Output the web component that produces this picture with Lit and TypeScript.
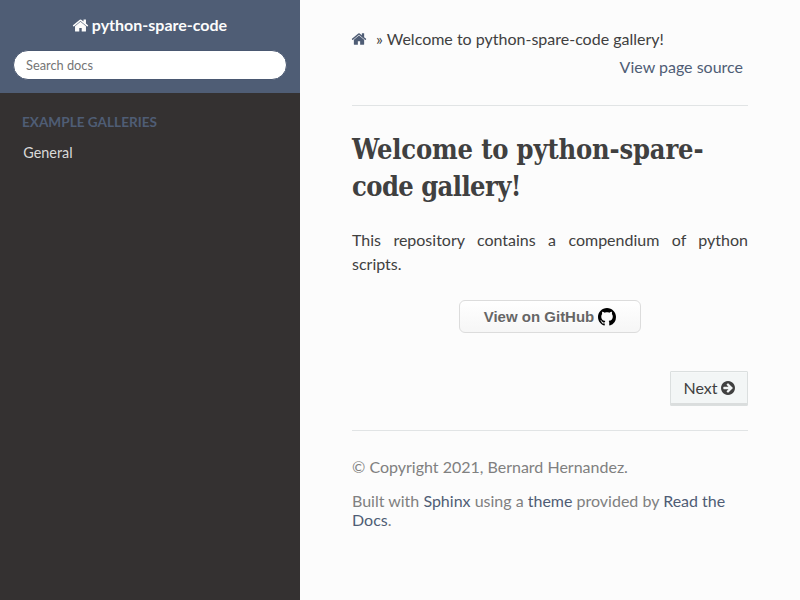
import { LitElement, html, css, svg } from "lit";
import { customElement } from "lit/decorators.js";

const homeIcon = svg`<path d="M1472 992v480q0 26-19 45t-45 19h-384v-384h-256v384h-384q-26 0-45-19t-19-45v-480q0-1 .5-3t.5-3l575-474 575 474q1 2 1 6zm223-69l-62 74q-8 9-21 11h-3q-13 0-21-7l-692-577-692 577q-12 8-24 7-13-2-21-11l-62-74q-8-10-7-23.5t11-21.5l719-599q32-26 76-26t76 26l244 204v-195q0-14 9-23t23-9h192q14 0 23 9t9 23v408l219 182q10 8 11 21.5t-7 23.5z"/>`;
const arrowIcon = svg`<path d="M1413 896q0-27-18-45l-91-91-362-362q-18-18-45-18t-45 18l-91 91q-18 18-18 45t18 45l189 189h-502q-26 0-45 19t-19 45v128q0 26 19 45t45 19h502l-189 189q-19 19-19 45t19 45l91 91q18 18 45 18t45-18l362-362 91-91q18-18 18-45zm251 0q0 209-103 385.5t-279.5 279.5-385.5 103-385.5-103-279.5-279.5-103-385.5 103-385.5 279.5-279.5 385.5-103 385.5 103 279.5 279.5 103 385.5z"/>`;
const githubIcon = svg`<path d="M8 0C3.58 0 0 3.58 0 8c0 3.54 2.29 6.53 5.47 7.59.4.07.55-.17.55-.38 0-.19-.01-.82-.01-1.49-2.01.37-2.53-.49-2.69-.94-.09-.23-.48-.94-.82-1.13-.28-.15-.68-.52-.01-.53.63-.01 1.08.58 1.23.82.72 1.21 1.87.87 2.33.66.07-.52.28-.87.51-1.07-1.78-.2-3.64-.89-3.64-3.95 0-.87.31-1.59.82-2.15-.08-.2-.36-1.02.08-2.12 0 0 .67-.21 2.2.82.64-.18 1.32-.27 2-.27s1.36.09 2 .27c1.53-1.04 2.2-.82 2.2-.82.44 1.1.16 1.92.08 2.12.51.56.82 1.27.82 2.15 0 3.07-1.87 3.75-3.65 3.95.29.25.54.73.54 1.48 0 1.07-.01 1.93-.01 2.2 0 .21.15.46.55.38A8.01 8.01 0 0 0 16 8c0-4.42-3.58-8-8-8z"/>`;

@customElement("docs-sidebar")
export class DocsSidebar extends LitElement {
  static styles = css`
    :host { display: block; width: 300px; flex: none; background: #343131; }
    .search { box-sizing: border-box; height: 93px; background: #4f5d75; padding: 13px 13px 0; text-align: center; }
    .brand { display: flex; justify-content: center; align-items: center; height: 24px; margin-right: 1px; color: #fcfcfc; font-weight: 700; font-size: 16px; text-decoration: none; }
    .brand svg { width: 17px; height: 17px; margin-right: 3px; fill: currentColor; }
    .field { box-sizing: border-box; display: block; width: 274px; height: 30px; margin-top: 13px; padding: 5px 12px 6px; border: 1px solid #4a5871; border-radius: 50px; background: #fff; font: 12.8px Lato, sans-serif; }
    .field::placeholder { color: #757575; }
    .caption { margin: 13px 0 0; padding: 0 22px; line-height: 32px; font-size: 13.6px; font-weight: 700; color: #4f5d75; text-transform: uppercase; }
    .item { display: block; padding: 6px 23.3px; font-size: 14.4px; line-height: 18px; color: #d9d9d9; text-decoration: none; }
  `;
  render() {
    return html`
      <div class="search">
        <a class="brand"><svg viewBox="0 0 1792 1792">${homeIcon}</svg>python-spare-code</a>
        <input class="field" type="text" placeholder="Search docs" />
      </div>
      <p class="caption">Example galleries</p>
      <a class="item">General</a>
    `;
  }
}

@customElement("app-root")
export class AppRoot extends LitElement {
  static styles = css`
    :host { display: flex; height: 600px; overflow: hidden; background: #fcfcfc; color: #404040; font: 16px/24px Lato, sans-serif; }
    .content { box-sizing: border-box; flex: 1; padding: 27px 52px 0; }
    a { color: #4f5d75; text-decoration: none; }
    .crumbs { display: flex; align-items: center; height: 24px; white-space: pre; }
    .home { display: flex; width: 24px; }
    .home svg { width: 16px; height: 16px; margin-left: -1px; fill: currentColor; }
    .source { display: block; margin: 4px 5px 0 0; text-align: right; }
    hr { height: 1px; margin: 26px 0 25px; border: 0; background: #e1e4e5; }
    h1 { margin: 0; font: 700 27px/37px "Roboto Slab", "DejaVu Serif Condensed", "DejaVu Serif", serif; font-stretch: condensed; letter-spacing: -0.15px; white-space: nowrap; }
    .tight { letter-spacing: -0.55px; }
    .intro { margin: 23px 0 0; text-align: justify; }
    .github { box-sizing: border-box; display: flex; justify-content: center; align-items: center; width: 182px; height: 33px; margin: 24px auto 0 107px; padding-bottom: 1px; border: 1px solid #dcdcdc; border-radius: 6px; background: linear-gradient(#ffffff, #f6f6f6); box-shadow: inset 0 1px 0 #fff; color: #666; font: 700 15px "Liberation Sans", Arial, sans-serif; text-shadow: 0 1px 0 #fff; }
    .github svg { width: 18px; height: 18px; margin: 2px 0 0 4px; fill: #000; }
    .next { box-sizing: border-box; display: flex; align-items: center; width: 78px; height: 35px; margin: 38px 0 0 auto; padding: 0 11px 1px 12.5px; border: 1px solid #dbdfdf; border-radius: 1px; background: #f3f6f6; box-shadow: inset 0 1px 2px -1px #fff, inset 0 -2px 0 rgba(0,0,0,.1); color: #404040; }
    .next svg { width: 14px; height: 14px; margin-left: 3.5px; fill: currentColor; flex: none; }
    .next + hr { margin: 24px 0 26px; }
    footer { color: #808080; }
    footer p { margin: 0; line-height: 19px; }
    footer .built { margin-top: 15px; }
  `;
  render() {
    return html`
      <docs-sidebar></docs-sidebar>
      <main class="content">
        <nav>
          <div class="crumbs"><a class="home"><svg viewBox="0 0 1792 1792">${homeIcon}</svg></a><span>» Welcome to python-spare-code gallery!</span></div>
          <a class="source">View page source</a>
        </nav>
        <hr />
        <h1>Welcome to python-spare-<br /><span class="tight">code gallery!</span></h1>
        <p class="intro">This repository contains a compendium of python scripts.</p>
        <a class="github">View on GitHub<svg viewBox="0 0 16 16">${githubIcon}</svg></a>
        <a class="next">Next<svg viewBox="128 128 1536 1536">${arrowIcon}</svg></a>
        <hr />
        <footer>
          <p>© Copyright 2021, Bernard Hernandez.</p>
          <p class="built">Built with <a>Sphinx</a> using a <a>theme</a> provided by <a>Read the Docs</a>.</p>
        </footer>
      </main>
    `;
  }
}
